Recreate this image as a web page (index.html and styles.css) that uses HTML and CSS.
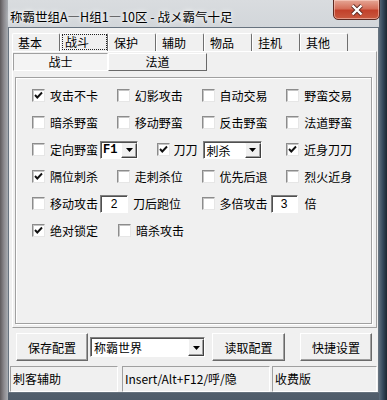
FILE: index.html
```html
<!DOCTYPE html>
<html lang="zh-CN">

<head>
  <meta charset="UTF-8" />
  <meta name="viewport" content="width=device-width, initial-scale=1.0" />
  <title>称霸世组A—H组1—10区</title>
  <link rel="stylesheet" href="styles.css">
</head>

<body>
  <div class="window">
    <div class="titlebar">
      <span class="title">称霸世组A—H组1—10区 - 战メ霸气十足</span>
      <div class="close">
        <svg width="14" height="12" viewBox="0 0 14 12">
          <path d="M2.5 1.5 L11.5 10.5 M11.5 1.5 L2.5 10.5" stroke="#5a2a22" stroke-width="4" />
          <path d="M2.5 1.5 L11.5 10.5 M11.5 1.5 L2.5 10.5" stroke="#fff" stroke-width="2.4" />
        </svg>
      </div>
    </div>

    <div class="client">
      <ul class="tabs">
        <li>基本</li>
        <li class="active"><span>战斗</span></li>
        <li>保护</li>
        <li>辅助</li>
        <li>物品</li>
        <li>挂机</li>
        <li>其他</li>
      </ul>

      <div class="page">
        <div class="subtabs">
          <div class="subtab active">战士</div>
          <div class="subtab">法道</div>
        </div>

        <div class="panel">
          <div class="row">
            <label class="cell"><span class="box"><svg width="11" height="11" viewBox="0 0 11 11"><path d="M2 5 L4.3 7.5 L9 2.5" /></svg></span>攻击不卡</label>
            <label class="cell"><span class="box"></span>幻影攻击</label>
            <label class="cell"><span class="box"></span>自动交易</label>
            <label class="cell"><span class="box"></span>野蛮交易</label>
          </div>
          <div class="row">
            <label class="cell"><span class="box"></span>暗杀野蛮</label>
            <label class="cell"><span class="box"></span>移动野蛮</label>
            <label class="cell"><span class="box"></span>反击野蛮</label>
            <label class="cell"><span class="box"></span>法道野蛮</label>
          </div>
          <div class="row">
            <div class="cell cell-a">
              <span class="box"></span>定向野蛮
              <div class="combo combo-key">
                <span class="value">F1</span>
                <span class="drop"><svg width="7" height="4" viewBox="0 0 7 4"><polygon points="0,0 7,0 3.5,4" /></svg></span>
              </div>
            </div>
            <div class="cell cell-b">
              <span class="box"><svg width="11" height="11" viewBox="0 0 11 11"><path d="M2 5 L4.3 7.5 L9 2.5" /></svg></span>刀刀
              <div class="combo combo-skill">
                <span class="value">刺杀</span>
                <span class="drop"><svg width="7" height="4" viewBox="0 0 7 4"><polygon points="0,0 7,0 3.5,4" /></svg></span>
              </div>
            </div>
            <label class="cell"><span class="box"><svg width="11" height="11" viewBox="0 0 11 11"><path d="M2 5 L4.3 7.5 L9 2.5" /></svg></span>近身刀刀</label>
          </div>
          <div class="row">
            <label class="cell"><span class="box"><svg width="11" height="11" viewBox="0 0 11 11"><path d="M2 5 L4.3 7.5 L9 2.5" /></svg></span>隔位刺杀</label>
            <label class="cell"><span class="box"></span>走刺杀位</label>
            <label class="cell"><span class="box"></span>优先后退</label>
            <label class="cell"><span class="box"></span>烈火近身</label>
          </div>
          <div class="row">
            <div class="cell cell-wide">
              <span class="box"></span>移动攻击
              <span class="edit edit-steps">2</span>
              <span class="after">刀后跑位</span>
            </div>
            <div class="cell cell-wide">
              <span class="box"></span>多倍攻击
              <span class="edit edit-times">3</span>
              <span class="after after-times">倍</span>
            </div>
          </div>
          <div class="row">
            <label class="cell"><span class="box"><svg width="11" height="11" viewBox="0 0 11 11"><path d="M2 5 L4.3 7.5 L9 2.5" /></svg></span>绝对锁定</label>
            <label class="cell"><span class="box"></span>暗杀攻击</label>
          </div>
        </div>
      </div>

      <div class="actions">
        <button class="btn btn-save">保存配置</button>
        <div class="combo combo-server">
          <span class="value">称霸世界</span>
          <span class="drop"><svg width="7" height="4" viewBox="0 0 7 4"><polygon points="0,0 7,0 3.5,4" /></svg></span>
        </div>
        <button class="btn btn-load">读取配置</button>
        <button class="btn btn-keys">快捷设置</button>
      </div>

      <div class="status">
        <span class="status-name">刺客辅助</span>
        <span class="status-keys">Insert/Alt+F12/呼/隐</span>
        <span class="status-edition">收费版</span>
      </div>
    </div>
  </div>
</body>

</html>
```

FILE: styles.css
```css
* {
  box-sizing: border-box;
}

body {
  margin: 0;
  background: #3b4450;
  font-family: "Noto Sans CJK SC", "Liberation Sans", sans-serif;
  font-size: 12px;
  color: #000;
}

ul {
  list-style: none;
  padding: 0;
  margin: 0;
}

/* window frame */

.window {
  position: relative;
  width: 387px;
  height: 400px;
  overflow: hidden;
  background:
    linear-gradient(to left, #1c2630 0, #34475a 4px, #5d6d7c 8px, transparent 8px),
    linear-gradient(to right, #5e5a5c 0, #8c8a8e 4px, #a9adb2 8px, transparent 8px),
    linear-gradient(#d9dcdf 0, #d2d6da 27px, #9aa2aa 200px, #4f5c6a 400px);
}

.titlebar {
  height: 27px;
  padding: 8px 0 0 10px;
}

.title {
  font-size: 12.5px;
  line-height: 16px;
  text-shadow: 0 0 6px #fff, 0 0 3px #fff;
}

.close {
  position: absolute;
  top: -1px;
  left: 333px;
  width: 47px;
  height: 21px;
  border: 1px solid #5e2a22;
  border-radius: 0 0 5px 5px;
  background: linear-gradient(#e5a796 0, #d56f5a 45%, #c2412b 55%, #c95a40 100%);
  box-shadow: inset 0 0 0 1px rgba(255, 220, 210, .5);
  display: flex;
  align-items: center;
  justify-content: center;
  padding-top: 1px;
}

.client {
  margin-left: 8px;
  width: 371px;
  height: 366px;
  border: 1px solid #67737f;
  background: #f0f0f0;
}

/* top tabs */

.tabs {
  display: flex;
  height: 18px;
  margin-top: 5px;
  padding-left: 3px;
}

.tabs li {
  width: 48px;
  height: 18px;
  padding-left: 5px;
  line-height: 17px;
  border-top: 1px solid #fff;
  border-left: 1px solid #fff;
  border-right: 1px solid #6f6f6f;
  border-radius: 2px 2px 0 0;
}

.tabs li.active {
  padding-left: 1px;
  padding-top: 0;
}

.tabs li.active span {
  display: block;
  width: 45px;
  height: 16px;
  padding-left: 3px;
  line-height: 15px;
  outline: 1px dotted #222;
  outline-offset: -1px;
}

.page {
  margin-left: 3px;
  width: 365px;
  height: 277px;
  padding-top: 1px;
  border-top: 1px solid #fff;
  border-left: 1px solid #fff;
  border-right: 1px solid #a0a0a0;
  border-bottom: 1px solid #a0a0a0;
}

/* button-style tabs */

.subtabs {
  display: flex;
  height: 18px;
}

.subtab {
  height: 18px;
  line-height: 16px;
  text-align: center;
  border: 1px solid;
  border-color: #fff #696969 #696969 #fff;
}

.subtab:first-child {
  width: 95px;
}

.subtab:last-child {
  width: 99px;
}

.subtab.active {
  border-color: #a0a0a0 #fff #fff #a0a0a0;
  background: #f4f4f4;
}

.panel {
  margin: 6px 0 0 2px;
  width: 357px;
  height: 247px;
  padding: 4px 0 0 16px;
  border: 1px solid #a0a0a0;
  box-shadow: inset 1px 1px #fff, 1px 1px #fff;
}

.row {
  display: flex;
  height: 27px;
  align-items: center;
}

.cell {
  width: 86px;
  display: flex;
  align-items: center;
  white-space: nowrap;
  line-height: 16px;
}

.cell-a {
  width: 126px;
}

.cell-b {
  width: 131px;
}

.cell-wide {
  width: 171px;
}

.box {
  width: 13px;
  height: 13px;
  margin-right: 5px;
  flex: none;
  background: #fff;
  border: 1px solid;
  border-color: #8c8c8c #e6e6e6 #e6e6e6 #8c8c8c;
  box-shadow: inset 1px 1px #c4c4c4;
}

.box svg {
  display: block;
}

.box path {
  fill: none;
  stroke: #111;
  stroke-width: 1.9;
}

.cell-b .box {
  margin-right: 4px;
}

/* combo boxes and edits */

.combo {
  display: flex;
  height: 18px;
  background: #fff;
  border: 1px solid;
  border-color: #808080 #fff #fff #808080;
  box-shadow: inset 1px 1px #505050;
}

.combo .value {
  flex: 1;
  padding: 1px 0 0 3px;
  line-height: 15px;
}

.combo .drop {
  width: 16px;
  margin: 1px 0 0;
  display: flex;
  align-items: center;
  justify-content: center;
  background: #f0f0f0;
  border: 1px solid;
  border-color: #f0f0f0 #404040 #404040 #fff;
  box-shadow: inset -1px -1px #a0a0a0;
}

.combo polygon {
  fill: #000;
}

.combo-key {
  width: 38px;
  margin-left: 2px;
}

.combo-key .value {
  font-family: "Liberation Mono", monospace;
  font-weight: bold;
  padding-left: 2px;
}

.combo-skill {
  width: 59px;
  margin-left: 5px;
}

.edit {
  width: 28px;
  height: 18px;
  text-align: center;
  line-height: 16px;
  font-family: "Liberation Sans", sans-serif;
  background: #fff;
  border: 1px solid;
  border-color: #808080 #fff #fff #808080;
  box-shadow: inset 1px 1px #505050;
}

.edit-steps {
  margin-left: 2px;
}

.edit-times {
  width: 27px;
  margin-left: 3px;
}

.after {
  margin-left: 5px;
}

.after-times {
  margin-left: 7px;
}

/* bottom buttons */

.actions {
  display: flex;
  align-items: center;
  height: 28px;
  margin-top: 5px;
  padding-left: 7px;
}

.btn {
  height: 28px;
  padding: 0;
  font: inherit;
  color: #000;
  background: #f0f0f0;
  border: 1px solid;
  border-color: #fff #696969 #696969 #fff;
  box-shadow: inset -1px -1px #a0a0a0;
}

.btn-save {
  width: 72px;
}

.combo-server {
  width: 115px;
  height: 20px;
  margin-left: 2px;
}

.combo-server .value {
  padding-top: 2px;
}

.btn-load {
  width: 73px;
  margin-left: 7px;
}

.btn-keys {
  width: 72px;
  margin-left: 15px;
}

/* status bar */

.status {
  display: flex;
  height: 26px;
  margin-top: 5px;
  padding-left: 1px;
}

.status span {
  height: 26px;
  padding-left: 2px;
  line-height: 24px;
  white-space: nowrap;
  border: 1px solid;
  border-color: #a0a0a0 #fff #fff #a0a0a0;
}

.status-name {
  width: 108px;
}

.status-keys {
  width: 148px;
  margin-left: 4px;
}

.status-edition {
  width: 105px;
  margin-left: 2px;
}
```
